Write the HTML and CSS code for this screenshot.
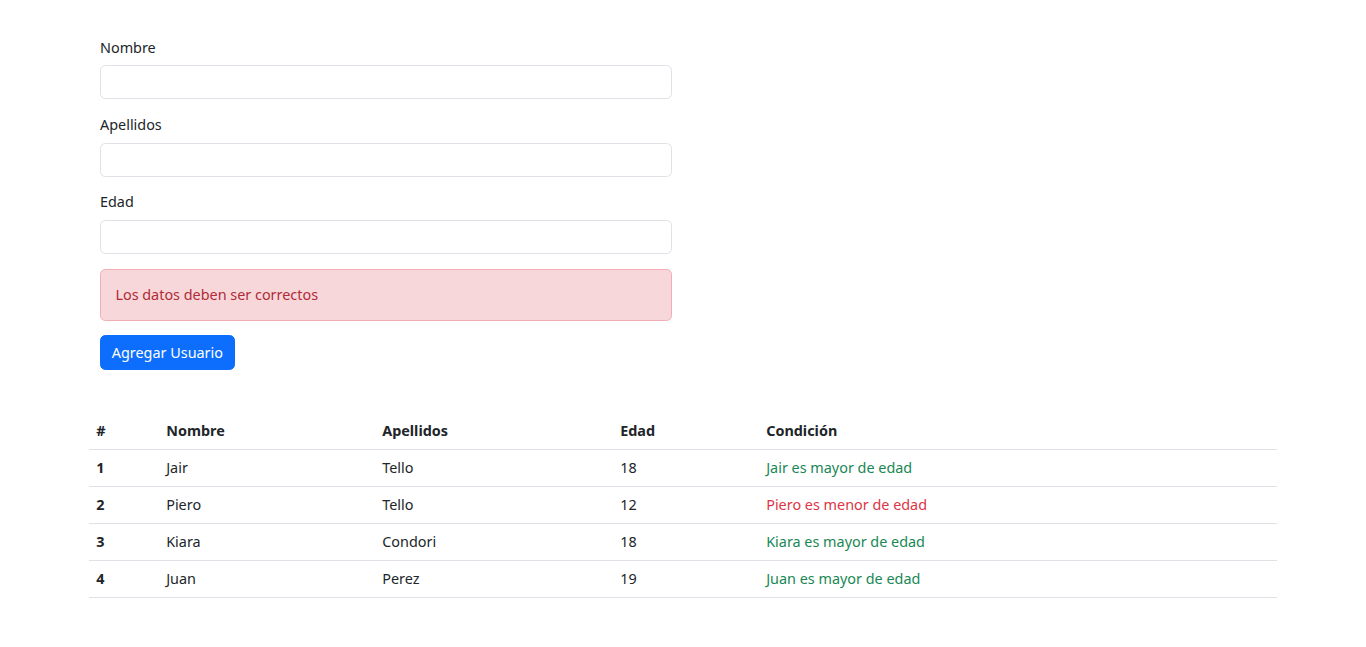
FILE: index.html
```html
<!DOCTYPE html>
<html lang="es">
<head>
<meta charset="utf-8">
<title>Usuarios</title>
<link rel="stylesheet" href="styles.css">
</head>
<body>
<div class="container">
  <form class="user-form">
    <div class="field">
      <label class="form-label" for="nombre">Nombre</label>
      <input class="form-control" id="nombre" type="text">
    </div>
    <div class="field">
      <label class="form-label" for="apellidos">Apellidos</label>
      <input class="form-control" id="apellidos" type="text">
    </div>
    <div class="field">
      <label class="form-label" for="edad">Edad</label>
      <input class="form-control" id="edad" type="text">
    </div>
    <div class="alert-danger">Los datos deben ser correctos</div>
    <button type="button" class="btn-primary">Agregar Usuario</button>
  </form>

  <table class="users">
    <colgroup>
      <col class="c1"><col class="c2"><col class="c3"><col class="c4"><col class="c5">
    </colgroup>
    <thead>
      <tr><th>#</th><th>Nombre</th><th>Apellidos</th><th>Edad</th><th>Condición</th></tr>
    </thead>
    <tbody>
      <tr><th>1</th><td>Jair</td><td>Tello</td><td>18</td><td class="ok">Jair es mayor de edad</td></tr>
      <tr><th>2</th><td>Piero</td><td>Tello</td><td>12</td><td class="bad">Piero es menor de edad</td></tr>
      <tr><th>3</th><td>Kiara</td><td>Condori</td><td>18</td><td class="ok">Kiara es mayor de edad</td></tr>
      <tr><th>4</th><td>Juan</td><td>Perez</td><td>19</td><td class="ok">Juan es mayor de edad</td></tr>
    </tbody>
  </table>
</div>
</body>
</html>
```

FILE: styles.css
```css
html, body {
  margin: 0;
  padding: 0;
  background: #fff;
}
body {
  font-family: "Noto Sans", "Liberation Sans", sans-serif;
  font-size: 14.4px;
  line-height: 1.5;
  color: #212529;
}
.container {
  width: 1188px;
  margin: 0 auto;
  padding-top: 36.5px;
}
.user-form {
  width: 572px;
  margin-left: 11px;
}
.field {
  margin-bottom: 14.4px;
}
.form-label {
  display: block;
  margin-bottom: 7.2px;
}
.form-control {
  display: block;
  box-sizing: border-box;
  width: 100%;
  height: 34.2px;
  padding: 5.4px 10.8px;
  font: inherit;
  color: #212529;
  background: #fff;
  border: 1px solid #dee2e6;
  border-radius: 5.4px;
  outline: none;
}
.alert-danger {
  box-sizing: border-box;
  padding: 14.4px;
  margin-bottom: 14.4px;
  background: #f8d7da;
  border: 1px solid #f1aeb5;
  border-radius: 5.4px;
  color: #b02a37;
}
.btn-primary {
  display: block;
  height: 34.2px;
  padding: 5.4px 10.8px;
  font: inherit;
  color: #fff;
  background: #0d6efd;
  border: 1px solid #0d6efd;
  border-radius: 5.4px;
}
.users {
  width: 1188px;
  margin-top: 43.2px;
  border-collapse: collapse;
  table-layout: fixed;
}
.c1 { width: 70px; }
.c2 { width: 216px; }
.c3 { width: 238px; }
.c4 { width: 146px; }
.c5 { width: 518px; }
.users th, .users td {
  padding: 7.2px;
  text-align: left;
  border-bottom: 1px solid #dee2e6;
  vertical-align: top;
}
.users th {
  font-weight: 700;
}
.users .ok { color: #198754; }
.users .bad { color: #dc3545; }
```
